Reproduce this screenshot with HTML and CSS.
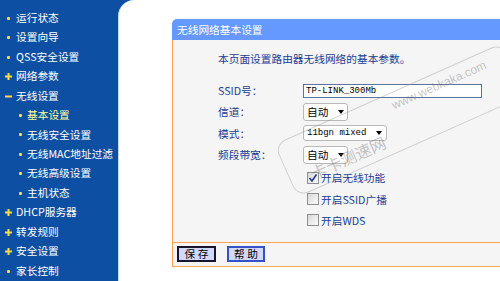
FILE: index.html
```html
<!DOCTYPE html>
<html lang="zh-CN">
<head>
<meta charset="utf-8">
<title>无线网络基本设置</title>
<link rel="stylesheet" href="styles.css">
</head>
<body>
<div class="page">
  <nav class="sidebar">
    <ul class="menu">
      <li class="item"><span class="ico dot"></span><span>运行状态</span></li>
      <li class="item"><span class="ico dot"></span><span>设置向导</span></li>
      <li class="item"><span class="ico dot"></span><span>QSS安全设置</span></li>
      <li class="item"><span class="ico"><svg class="pm" viewBox="0 0 7 7"><path d="M0 3.5H7M3.5 0V7"/></svg></span><span>网络参数</span></li>
      <li class="item"><span class="ico"><svg class="pm" viewBox="0 0 7 7"><path d="M0 3.5H7"/></svg></span><span>无线设置</span></li>
      <li class="item sub active"><span class="ico dot"></span><span>基本设置</span></li>
      <li class="item sub"><span class="ico dot"></span><span>无线安全设置</span></li>
      <li class="item sub"><span class="ico dot"></span><span>无线MAC地址过滤</span></li>
      <li class="item sub"><span class="ico dot"></span><span>无线高级设置</span></li>
      <li class="item sub"><span class="ico dot"></span><span>主机状态</span></li>
      <li class="item"><span class="ico"><svg class="pm" viewBox="0 0 7 7"><path d="M0 3.5H7M3.5 0V7"/></svg></span><span>DHCP服务器</span></li>
      <li class="item"><span class="ico"><svg class="pm" viewBox="0 0 7 7"><path d="M0 3.5H7M3.5 0V7"/></svg></span><span>转发规则</span></li>
      <li class="item"><span class="ico"><svg class="pm" viewBox="0 0 7 7"><path d="M0 3.5H7M3.5 0V7"/></svg></span><span>安全设置</span></li>
      <li class="item"><span class="ico dot"></span><span>家长控制</span></li>
    </ul>
  </nav>
  <main class="main">
    <section class="panel">
      <header class="panel-head">无线网络基本设置</header>
      <div class="panel-body">
        <p class="intro">本页面设置路由器无线网络的基本参数。</p>
        <div class="form">
          <div class="row"><span class="label">SSID号：</span><span class="input">TP-LINK_300Mb</span></div>
          <div class="row"><span class="label">信道：</span><span class="select narrow"><span>自动</span><i class="arrow"></i></span></div>
          <div class="row"><span class="label">模式：</span><span class="select wide"><span class="mono">11bgn mixed</span><i class="arrow"></i></span></div>
          <div class="row"><span class="label">频段带宽：</span><span class="select narrow"><span>自动</span><i class="arrow"></i></span></div>
        </div>
        <div class="checks">
          <div class="check-row"><span class="cb"><svg viewBox="0 0 10 10"><path d="M1.5 5 L4 8 L8.5 1.5"/></svg></span><span>开启无线功能</span></div>
          <div class="check-row"><span class="cb"></span><span>开启SSID广播</span></div>
          <div class="check-row"><span class="cb"></span><span>开启WDS</span></div>
        </div>
      </div>
      <div class="panel-foot">
        <button class="btn btn-default">保 存</button>
        <button class="btn">帮 助</button>
      </div>
    </section>
    <div class="wm-box"></div>
    <span class="wm wm-cn">卡卡测速网</span>
    <span class="wm wm-url">www.webkaka.com</span>
  </main>
</div>
</body>
</html>
```

FILE: styles.css
```css
* {
  margin: 0;
  padding: 0;
  box-sizing: border-box;
}

html, body {
  width: 500px;
  height: 281px;
  overflow: hidden;
}

body {
  font-family: "Noto Sans CJK SC", "Noto Sans", sans-serif;
  font-size: 10.7px;
  background: #0d4fa2;
}

.page {
  display: flex;
  height: 281px;
}

.sidebar {
  width: 118px;
  flex: none;
  background: #0d4fa2;
  padding-top: 8.6px;
}

.menu {
  list-style: none;
}

.item {
  display: flex;
  align-items: center;
  height: 19.45px;
  padding-left: 4px;
  color: #ffffff;
  line-height: 1;
  white-space: nowrap;
}

.item.sub {
  padding-left: 16px;
}

.item.active {
  color: #ffff99;
}

.ico {
  width: 9px;
  height: 9px;
  flex: none;
  margin-right: 3px;
  display: flex;
  align-items: center;
  justify-content: center;
}

.sub .ico {
  margin-right: 2px;
}

.dot::before {
  content: "";
  width: 3px;
  height: 3px;
  border-radius: 1px;
  background: #ffdd44;
}

.pm {
  width: 7px;
  height: 7px;
  stroke: #ffdd44;
  stroke-width: 2;
  fill: none;
}

.main {
  position: relative;
  flex: 1;
  min-width: 0;
  background: #ffffff;
  border-left: 1px solid #c4d6f0;
  border-top-left-radius: 16px;
  padding-top: 19px;
  padding-left: 53px;
  overflow: hidden;
}

.panel-head {
  height: 21px;
  line-height: 21px;
  padding-left: 5px;
  background: #6699ff;
  color: #ffffff;
  border-top-left-radius: 5px;
}

.panel-body {
  background: #f5f5f5;
  border-left: 1px solid #ffa64d;
  padding: 8px 0 11px 45px;
  color: #1a3c94;
}

.intro {
  height: 22px;
  line-height: 22px;
}

.form {
  margin-top: 10px;
}

.row {
  display: flex;
  align-items: center;
  height: 21.3px;
}

.label {
  width: 85px;
  flex: none;
}

.input {
  width: 179px;
  height: 14px;
  border: 1px solid #5f7299;
  background: #ffffff;
  padding-left: 2px;
  font-family: "Liberation Mono", monospace;
  font-size: 9px;
  line-height: 12px;
  color: #000000;
}

.select {
  display: flex;
  align-items: center;
  height: 18px;
  padding-left: 3px;
  border: 1px solid #b8b8b8;
  border-radius: 3px;
  background: #ffffff;
  color: #000000;
}

.select.narrow {
  width: 45px;
}

.select.wide {
  width: 84px;
  height: 16px;
}

.mono {
  font-family: "Liberation Mono", monospace;
  font-size: 9px;
}

.arrow {
  margin-left: auto;
  margin-right: 3px;
  width: 0;
  height: 0;
  border-left: 3.5px solid transparent;
  border-right: 3.5px solid transparent;
  border-top: 4px solid #000000;
}

.wide .arrow {
  margin-right: 4px;
}

.checks {
  margin-top: 2px;
}

.check-row {
  display: flex;
  align-items: center;
  height: 21.3px;
  padding-left: 89px;
}

.cb {
  width: 12px;
  height: 12px;
  flex: none;
  margin-right: 2px;
  border: 1px solid #8e8f8f;
  background: linear-gradient(135deg, #d8d8d8, #fbfbfb);
  display: flex;
}

.cb svg {
  width: 10px;
  height: 10px;
  fill: none;
  stroke: #24368c;
  stroke-width: 1.6;
}

.panel-foot {
  display: flex;
  gap: 11px;
  height: 25px;
  padding: 3px 0 4px 4px;
  background: #f5f5f5;
  border-left: 1px solid #ffa64d;
  border-top: 1px solid #ffa64d;
  border-bottom: 1px solid #ffa64d;
}

.btn {
  width: 38px;
  height: 16px;
  padding: 0;
  font-family: "Noto Sans CJK SC", sans-serif;
  font-size: 10.7px;
  line-height: 12px;
  color: #000000;
  background: #d3d8fa;
  border: 2px solid #3352c7;
}

.btn-default {
  width: 39px;
  border-color: #15152e;
}

.wm {
  position: absolute;
  white-space: nowrap;
  color: rgba(110, 110, 110, 0.4);
  transform: translate(-50%, -50%) rotate(-24deg);
  pointer-events: none;
}

.wm-cn {
  left: 229px;
  top: 157px;
  font-size: 16px;
}

.wm-url {
  left: 320px;
  top: 85px;
  font-family: "Liberation Sans", sans-serif;
  font-size: 12px;
}

.wm-box {
  position: absolute;
  left: 281px;
  top: 120px;
  width: 250px;
  height: 58px;
  border: 1px solid rgba(140, 140, 140, 0.35);
  border-radius: 12px;
  transform: translate(-50%, -50%) rotate(-24deg);
  pointer-events: none;
}
```
